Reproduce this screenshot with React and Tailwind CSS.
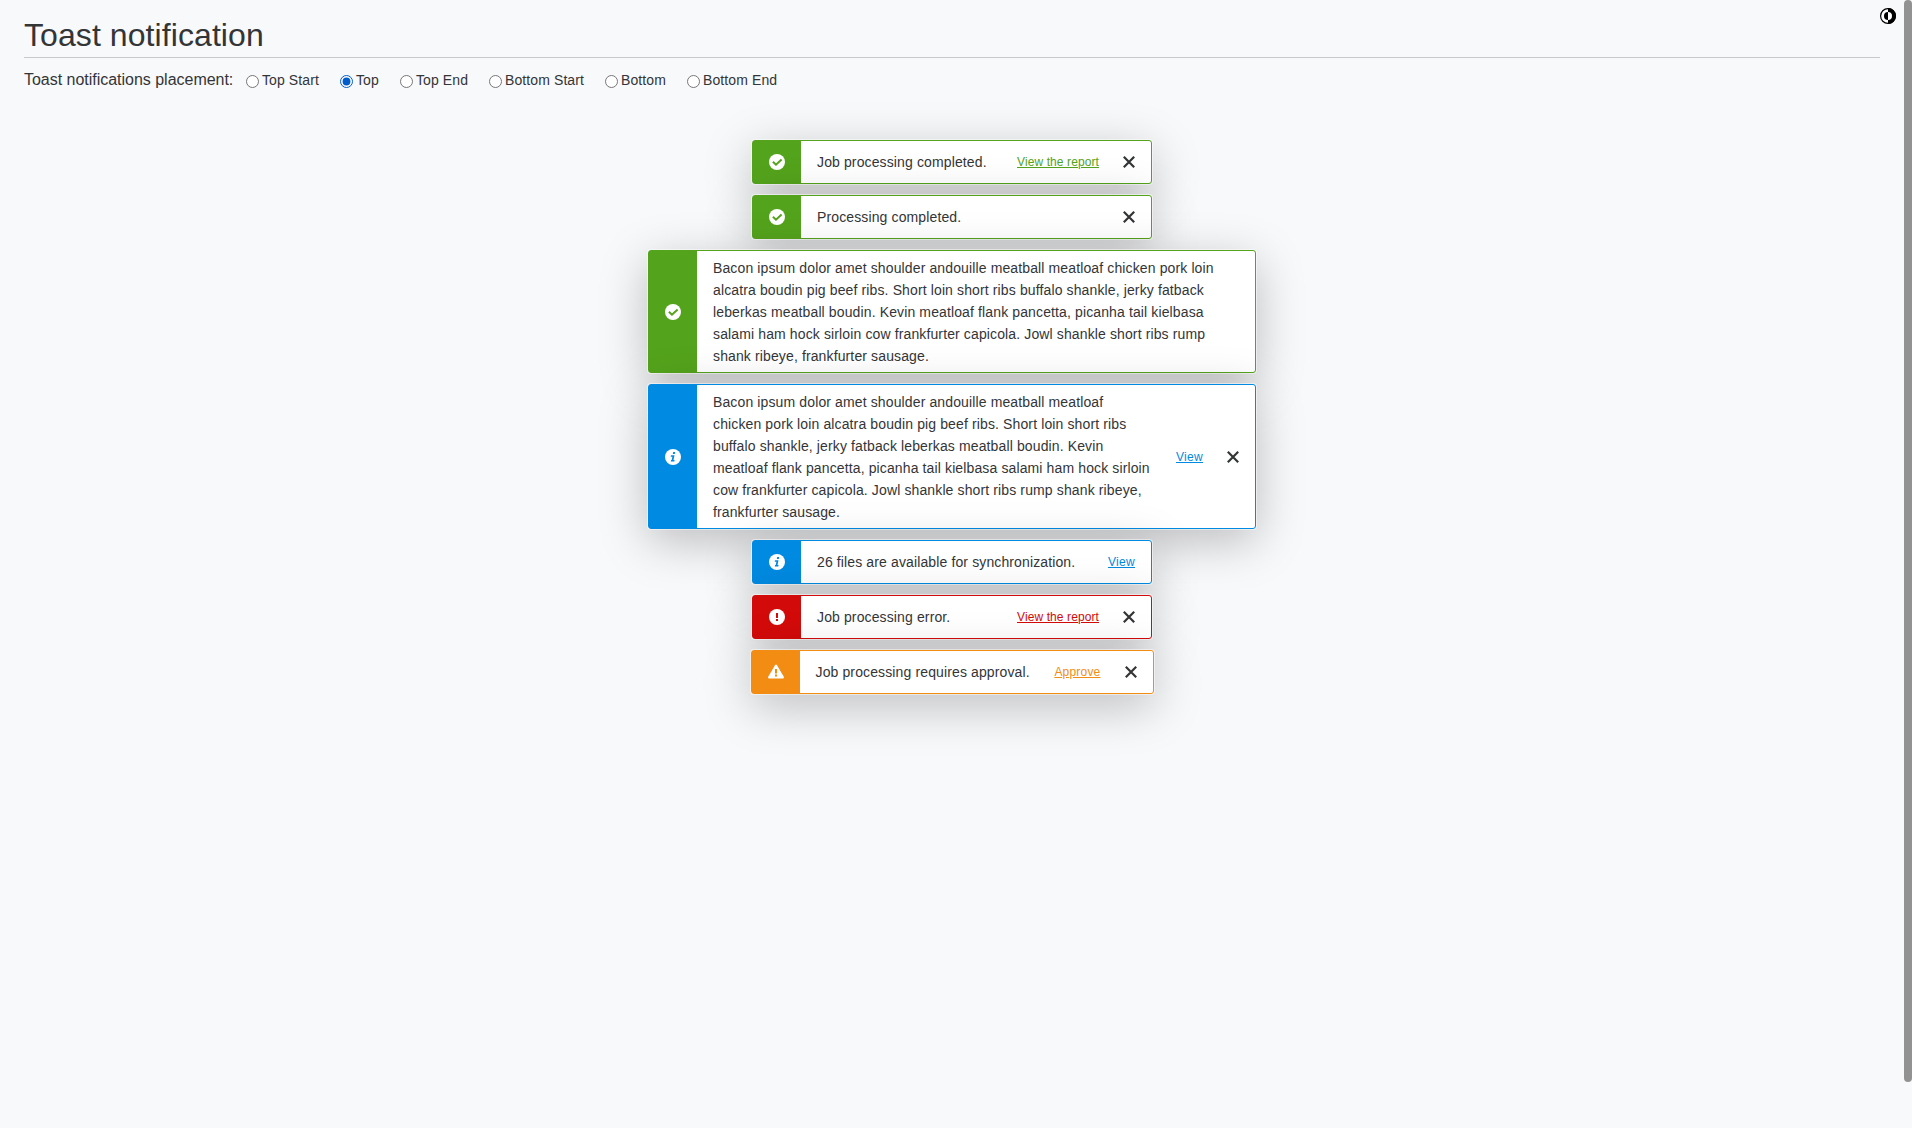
import React from "react";

const themes = {
  success: { block: "bg-[#54a31c]", border: "border-[#54a31c]", link: "text-[#54a31c]" },
  info: { block: "bg-[#008ae1]", border: "border-[#008ae1]", link: "text-[#008ae1]" },
  error: { block: "bg-[#d30a0a]", border: "border-[#d30a0a]", link: "text-[#d30a0a]" },
  warning: { block: "bg-[#f28c13]", border: "border-[#f28c13]", link: "text-[#f28c13]" },
};

const widths = {
  regular: "min-w-[400px]",
  medium: "min-w-[403px]",
  wide: "w-[608px]",
};

const linkTracking = {
  View: "tracking-[0.3px]",
  Approve: "tracking-[0.2px]",
  "View the report": "tracking-[0.1px]",
};

function StatusIcon({ type }) {
  return (
    <svg viewBox="0 0 16 16" className="size-4 text-white" fill="currentColor">
      {type === "success" && (
        <>
          <circle cx="8" cy="8" r="8" />
          <path d="M3.900 7.700l3.100 3 5.600-5.100" className="fill-none stroke-[#54a31c]" strokeWidth="2" />
        </>
      )}
      {type === "info" && (
        <>
          <circle cx="8" cy="8" r="8" />
          <path d="M8.200 3h2l-.4 2.100h-2zM6 6.200h3.500l-1 4.800h1.100l-.3 1.600H5.800L6.100 11h.6l.7-3.300H5.700z" className="fill-[#008ae1]" />
        </>
      )}
      {type === "error" && (
        <>
          <circle cx="8" cy="8" r="8" />
          <path d="M7 4h2v5H7zM7 10h2v2H7z" className="fill-[#d30a0a]" />
        </>
      )}
      {type === "warning" && (
        <>
          <path d="M7 1.300q1-1.400 2 0l6.800 11.500q.6 1.500-1 1.700H1.200q-1.600-.2-1-1.700z" />
          <path d="M7 5h2v4.500H7zM7 10.500h2v2H7z" className="fill-[#f28c13]" />
        </>
      )}
    </svg>
  );
}

function Toast({ type, size = "regular", lines, link, closable }) {
  const t = themes[type];
  return (
    <div
      className={`flex rounded-[3px] border bg-white shadow-[0_0_0_1px_rgba(255,255,255,0.5),0_12px_48px_0_rgba(0,0,0,0.25)] ${t.border} ${widths[size]}`}
    >
      <div className={`flex w-12 shrink-0 items-center justify-center ${t.block}`}>
        <StatusIcon type={type} />
      </div>
      <div className={`grow pl-4 pr-4 text-sm leading-[22px] tracking-[0.125px] whitespace-nowrap ${size === "wide" ? "py-[5.5px]" : "py-2.5"}`}>
        {lines.map((line) => (
          <div key={line}>{line}</div>
        ))}
      </div>
      {link && (
        <a href="#" className={`self-center pl-2 text-xs leading-4 underline whitespace-nowrap ${linkTracking[link]} ${t.link} ${closable ? "pr-2" : "pr-4"}`}>
          {link}
        </a>
      )}
      {closable && (
        <button className="flex w-11 shrink-0 items-center justify-center" aria-label="Close">
          <svg viewBox="0 0 12 12" className="size-3 stroke-[#333537]" fill="none" strokeWidth="2.2">
            <path d="M.8.8l10.400 10.400M11.200.8L.8 11.200" />
          </svg>
        </button>
      )}
    </div>
  );
}

const toasts = [
  { type: "success", lines: ["Job processing completed."], link: "View the report", closable: true },
  { type: "success", lines: ["Processing completed."], closable: true },
  {
    type: "success",
    size: "wide",
    lines: [
      "Bacon ipsum dolor amet shoulder andouille meatball meatloaf chicken pork loin",
      "alcatra boudin pig beef ribs. Short loin short ribs buffalo shankle, jerky fatback",
      "leberkas meatball boudin. Kevin meatloaf flank pancetta, picanha tail kielbasa",
      "salami ham hock sirloin cow frankfurter capicola. Jowl shankle short ribs rump",
      "shank ribeye, frankfurter sausage.",
    ],
  },
  {
    type: "info",
    size: "wide",
    lines: [
      "Bacon ipsum dolor amet shoulder andouille meatball meatloaf",
      "chicken pork loin alcatra boudin pig beef ribs. Short loin short ribs",
      "buffalo shankle, jerky fatback leberkas meatball boudin. Kevin",
      "meatloaf flank pancetta, picanha tail kielbasa salami ham hock sirloin",
      "cow frankfurter capicola. Jowl shankle short ribs rump shank ribeye,",
      "frankfurter sausage.",
    ],
    link: "View",
    closable: true,
  },
  { type: "info", lines: ["26 files are available for synchronization."], link: "View" },
  { type: "error", lines: ["Job processing error."], link: "View the report", closable: true },
  { type: "warning", size: "medium", lines: ["Job processing requires approval."], link: "Approve", closable: true },
];

const placements = [
  { name: "Top Start", width: "w-[94px]" },
  { name: "Top", width: "w-[60px]" },
  { name: "Top End", width: "w-[89px]" },
  { name: "Bottom Start", width: "w-[116px]" },
  { name: "Bottom", width: "w-[82px]" },
  { name: "Bottom End", width: "w-[110px]" },
];

export default function App() {
  return (
    <div className="flex h-[1128px] w-[1912px] overflow-hidden bg-[#f8f9fb] font-['Liberation_Sans',sans-serif] text-[#333537]">
      <div className="w-[1904px]">
        <header className="flex h-[58px] justify-between pl-6">
          <h1 className="w-[1856px] border-b border-[#c8c9cb] pt-[15px] text-[32px] leading-10 tracking-[0.08px]">Toast notification</h1>
          <button className="mt-2 mr-2 size-4" aria-label="Toggle contrast">
            <svg viewBox="0 0 16 16" className="size-4">
              <circle cx="8" cy="8" r="7.4" fill="#fff" stroke="#000" strokeWidth="1.200" />
              <path d="M8 0a8 8 0 0 1 0 16v-4a4 4 0 0 0 0-8z" />
              <path d="M8 4a4 4 0 0 0 0 8z" />
            </svg>
          </button>
        </header>
        <div className="flex h-[82px] items-start pl-6">
          <span className="w-[222px] pt-[11px] text-base leading-[22px] tracking-[-0.02px]">Toast notifications placement:</span>
          {placements.map((p) => (
            <label key={p.name} className={`flex pt-[11px] ${p.width}`}>
              <input type="radio" name="placement" defaultChecked={p.name === "Top"} className="mt-1.5 size-[13px] shrink-0 accent-[#005ccc]" />
              <span className="ml-[3px] text-sm leading-[22px] tracking-[0.1px] whitespace-nowrap">{p.name}</span>
            </label>
          ))}
        </div>
        <main className="flex flex-col items-center gap-[11px]">
          {toasts.map((t, i) => (
            <Toast key={i} {...t} />
          ))}
        </main>
      </div>
      <div className="h-[1082px] w-2 rounded-full bg-[#929292]" />
    </div>
  );
}
